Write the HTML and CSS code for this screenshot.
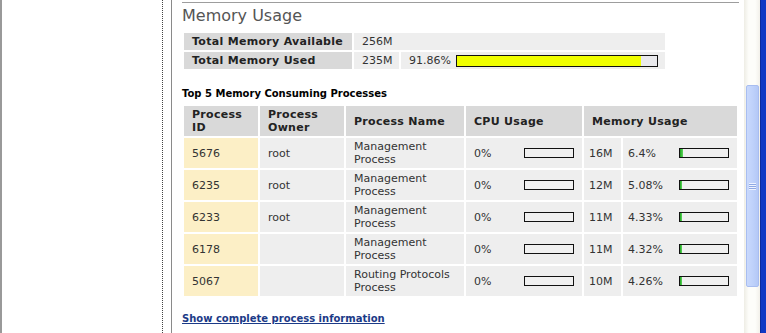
FILE: index.html
```html
<!DOCTYPE html>
<html lang="en">

<head>
    <meta charset="UTF-8">
    <meta name="viewport" content="width=device-width, initial-scale=1.0">
    <title>System Status - Memory</title>
    <link rel="stylesheet" href="styles.css">
</head>

<body>
    <div class="window">
        <div class="nav"></div>

        <div class="content">
            <div class="panel">
                <h2>Memory Usage</h2>
                <table class="summary">
                    <colgroup>
                        <col class="c-label">
                        <col class="c-size">
                        <col class="c-pct">
                    </colgroup>
                    <tr>
                        <th>Total Memory Available</th>
                        <td colspan="2">256M</td>
                    </tr>
                    <tr>
                        <th>Total Memory Used</th>
                        <td>235M</td>
                        <td>
                            <div class="meter">
                                <span>91.86%</span>
                                <div class="bar big"><div class="fill yellow" style="width: 91.86%"></div></div>
                            </div>
                        </td>
                    </tr>
                </table>

                <h3>Top 5 Memory Consuming Processes</h3>
                <table class="procs">
                    <colgroup>
                        <col class="c-id">
                        <col class="c-owner">
                        <col class="c-name">
                        <col class="c-cpu">
                        <col class="c-mb">
                        <col class="c-mem">
                    </colgroup>
                    <tr>
                        <th>Process<br>ID</th>
                        <th>Process<br>Owner</th>
                        <th>Process Name</th>
                        <th>CPU Usage</th>
                        <th colspan="2">Memory Usage</th>
                    </tr>
                    <tr>
                        <td class="pid">5676</td>
                        <td>root</td>
                        <td>Management<br>Process</td>
                        <td><div class="meter"><span>0%</span><div class="bar"></div></div></td>
                        <td class="mb">16M</td>
                        <td class="pct"><div class="meter"><span>6.4%</span><div class="bar"><div class="fill green" style="width: 6.4%"></div></div></div></td>
                    </tr>
                    <tr>
                        <td class="pid">6235</td>
                        <td>root</td>
                        <td>Management<br>Process</td>
                        <td><div class="meter"><span>0%</span><div class="bar"></div></div></td>
                        <td class="mb">12M</td>
                        <td class="pct"><div class="meter"><span>5.08%</span><div class="bar"><div class="fill green" style="width: 5.08%"></div></div></div></td>
                    </tr>
                    <tr>
                        <td class="pid">6233</td>
                        <td>root</td>
                        <td>Management<br>Process</td>
                        <td><div class="meter"><span>0%</span><div class="bar"></div></div></td>
                        <td class="mb">11M</td>
                        <td class="pct"><div class="meter"><span>4.33%</span><div class="bar"><div class="fill green" style="width: 4.33%"></div></div></div></td>
                    </tr>
                    <tr>
                        <td class="pid">6178</td>
                        <td></td>
                        <td>Management<br>Process</td>
                        <td><div class="meter"><span>0%</span><div class="bar"></div></div></td>
                        <td class="mb">11M</td>
                        <td class="pct"><div class="meter"><span>4.32%</span><div class="bar"><div class="fill green" style="width: 4.32%"></div></div></div></td>
                    </tr>
                    <tr>
                        <td class="pid">5067</td>
                        <td></td>
                        <td>Routing Protocols<br>Process</td>
                        <td><div class="meter"><span>0%</span><div class="bar"></div></div></td>
                        <td class="mb">10M</td>
                        <td class="pct"><div class="meter"><span>4.26%</span><div class="bar"><div class="fill green" style="width: 4.26%"></div></div></div></td>
                    </tr>
                </table>

                <a class="more" href="#">Show complete process information</a>
            </div>
        </div>

        <div class="scrollbar">
            <div class="thumb"><span class="grip"></span></div>
        </div>
    </div>
</body>

</html>
```

FILE: styles.css
```css
* {
    box-sizing: border-box;
}

body {
    margin: 0;
    font-family: "DejaVu Sans", Verdana, sans-serif;
    background-color: #fff;
    color: #333;
}

.window {
    display: flex;
    height: 333px;
    overflow: hidden;
    border-right: 5px solid #1038c4;
}

.nav {
    width: 163px;
    flex: none;
    border-left: 2px solid #999;
    border-right: 1px dotted #444;
}

.content {
    flex: 1;
    margin-left: 8px;
    border-left: 1px solid #8a8a8a;
    padding: 2px 5px 0 10px;
}

.panel {
    border-top: 1px solid #9d9d9d;
}

h2 {
    margin: 3px 0 5px;
    font-size: 16px;
    line-height: 20px;
    font-weight: normal;
    color: #555;
}

h3 {
    margin: 17px 0 4px;
    font-size: 10px;
    line-height: 12px;
    color: #000;
}

table {
    border-collapse: separate;
    border-spacing: 2px;
    table-layout: fixed;
    font-size: 11px;
}

th {
    text-align: left;
    font-weight: bold;
    letter-spacing: 0.3px;
    background-color: #d9d9d9;
    color: #222;
}

td {
    background-color: #eeeeee;
}

/* summary */
.summary {
    width: 485px;
}

.summary th,
.summary td {
    height: 17px;
    padding: 0 7px 0 8px;
}

.c-label { width: 168px; }
.c-size { width: 45px; }
.c-pct { width: 264px; }

/* processes */
.procs {
    width: 557px;
}

.procs th,
.procs td {
    height: 30px;
    padding: 0 8px;
    line-height: 13px;
}

.procs td.pid {
    background-color: #fcefc6;
}

.procs td.mb,
.procs td.pct {
    padding-left: 5px;
}

.c-id { width: 74px; }
.c-owner { width: 84px; }
.c-name { width: 118px; }
.c-cpu { width: 116px; }
.c-mb { width: 37px; }
.c-mem { width: 114px; }

.meter {
    display: flex;
    align-items: center;
    justify-content: space-between;
}

.bar {
    width: 50px;
    height: 10px;
    border: 1px solid #111;
    background-color: #f0f0f0;
}

.bar.big {
    width: 202px;
    height: 12px;
    background-color: #e9e9ec;
}

.fill {
    height: 100%;
}

.fill.yellow {
    background-color: #f0ff00;
}

.fill.green {
    background: linear-gradient(to right, #1fa31f, #5fd65f);
}

.more {
    display: inline-block;
    margin-top: 15px;
    font-size: 10px;
    line-height: 12px;
    font-weight: bold;
    color: #1b3a87;
}

/* window scrollbar */
.scrollbar {
    width: 17px;
    flex: none;
    padding: 85px 1px 0 2px;
    background: linear-gradient(to right, #eeede5, #fdfdfa 30%, #fdfdfa 70%, #f2f0ea);
    border-right: 1px solid #0b2a9e;
}

.thumb {
    height: 202px;
    border: 1px solid #a8bdf0;
    border-radius: 2px;
    background: linear-gradient(to right, #c9d9fd, #bdd0fa 60%, #b4c8f6);
    display: flex;
    align-items: center;
    justify-content: center;
}

.grip {
    width: 7px;
    height: 7px;
    background: repeating-linear-gradient(to bottom, #eef3ff 0, #eef3ff 1px, #8fa9e4 1px, #8fa9e4 2px);
}
```
